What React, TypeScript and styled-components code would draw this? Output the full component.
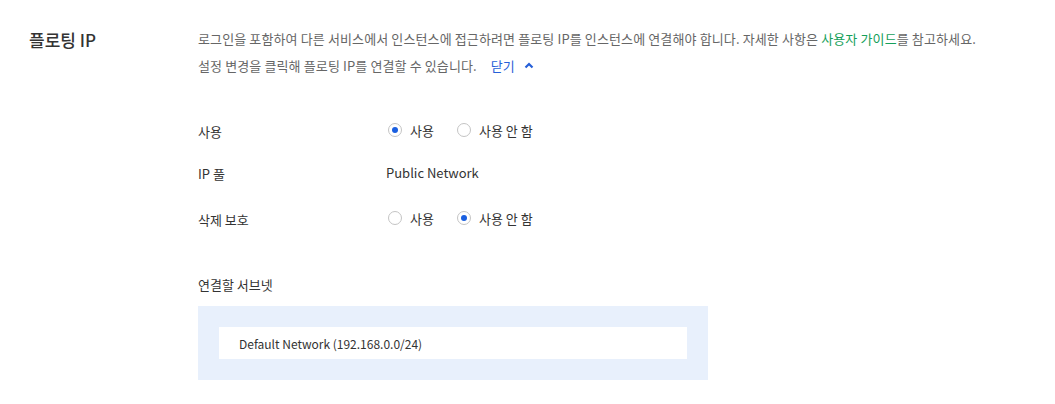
import React from "react";
import styled, { createGlobalStyle } from "styled-components";

const Global = createGlobalStyle`
  html, body { margin: 0; padding: 0; background: #fff; }
  body { font-family: "Noto Sans CJK KR", "Noto Sans", sans-serif; }
  * { box-sizing: border-box; }
`;

const Section = styled.section`
  display: flex;
  padding: 25px 29px 0 29px;
  width: 1055px;
`;

const Title = styled.h2`
  margin: 0;
  width: 169px;
  flex: none;
  font-size: 17px;
  font-weight: 500;
  color: #333;
  line-height: 27px;
  padding-top: 1px;
`;

const Content = styled.div`
  flex: 1;
  display: flex;
  flex-direction: column;
`;

const Desc = styled.p`
  margin: 0;
  font-size: 13px;
  line-height: 27px;
  color: #666;
  letter-spacing: 0.12px;
`;

const GreenLink = styled.a`
  color: #15a05a;
  text-decoration: none;
`;

const Toggle = styled.button`
  border: 0;
  background: none;
  padding: 0;
  margin-left: 14px;
  font: inherit;
  font-size: 13px;
  color: #2760d8;
  display: inline-flex;
  align-items: center;
  gap: 9px;
  cursor: pointer;
`;

const Form = styled.div`
  display: flex;
  flex-direction: column;
  margin-top: 30px;
`;

const Row = styled.div<{ $h: number }>`
  display: flex;
  align-items: center;
  height: ${(p) => p.$h}px;
`;

const Label = styled.div`
  width: 188px;
  flex: none;
  font-size: 13px;
  color: #333;
  padding-top: 3px;
`;

const Value = styled.div`
  font-size: 13px;
  color: #333;
`;

const RadioGroup = styled.div`
  display: flex;
  align-items: center;
  gap: 21px;
`;

const RadioItem = styled.label`
  display: flex;
  align-items: center;
  gap: 8px;
  font-size: 13px;
  color: #333;
`;

const RadioCircle = styled.span<{ $on: boolean }>`
  width: 14px;
  height: 14px;
  margin-left: 2px;
  border-radius: 50%;
  border: 1px solid #c4c4c4;
  background: #fff;
  display: inline-flex;
  align-items: center;
  justify-content: center;
  &::after {
    content: "";
    width: 6px;
    height: 6px;
    border-radius: 50%;
    background: ${(p) => (p.$on ? "#1a5fe0" : "transparent")};
  }
`;

const SubnetLabel = styled.div`
  margin-top: 32px;
  font-size: 13px;
  color: #333;
  line-height: 20px;
`;

const SubnetBox = styled.div`
  margin-top: 11px;
  width: 510px;
  background: #e8f0fc;
  padding: 21px;
`;

const SubnetItem = styled.div`
  background: #fff;
  height: 32px;
  display: flex;
  align-items: center;
  padding-left: 20px;
  font-size: 12px;
  color: #333;
`;

function Radio({ on, label }: { on: boolean; label: string }) {
  return (
    <RadioItem>
      <RadioCircle $on={on} />
      {label}
    </RadioItem>
  );
}

export default function App() {
  return (
    <>
      <Global />
      <Section>
        <Title>플로팅 IP</Title>
        <Content>
          <Desc>
            로그인을 포함하여 다른 서비스에서 인스턴스에 접근하려면 플로팅 IP를 인스턴스에 연결해야 합니다. 자세한 사항은{" "}
            <GreenLink>사용자 가이드</GreenLink>를 참고하세요.
          </Desc>
          <Desc>
            설정 변경을 클릭해 플로팅 IP를 연결할 수 있습니다.
            <Toggle>
              닫기
              <svg width="10" height="7" viewBox="0 0 10 7">
                <path d="M1.5 5.5 L5 2 L8.5 5.5" fill="none" stroke="#2760d8" strokeWidth="2.2" />
              </svg>
            </Toggle>
          </Desc>
          <Form>
            <Row $h={42}>
              <Label>사용</Label>
              <RadioGroup>
                <Radio on label="사용" />
                <Radio on={false} label="사용 안 함" />
              </RadioGroup>
            </Row>
            <Row $h={42}>
              <Label>IP 풀</Label>
              <Value>Public Network</Value>
            </Row>
            <Row $h={50}>
              <Label>삭제 보호</Label>
              <RadioGroup>
                <Radio on={false} label="사용" />
                <Radio on label="사용 안 함" />
              </RadioGroup>
            </Row>
          </Form>
          <SubnetLabel>연결할 서브넷</SubnetLabel>
          <SubnetBox>
            <SubnetItem>Default Network (192.168.0.0/24)</SubnetItem>
          </SubnetBox>
        </Content>
      </Section>
    </>
  );
}
